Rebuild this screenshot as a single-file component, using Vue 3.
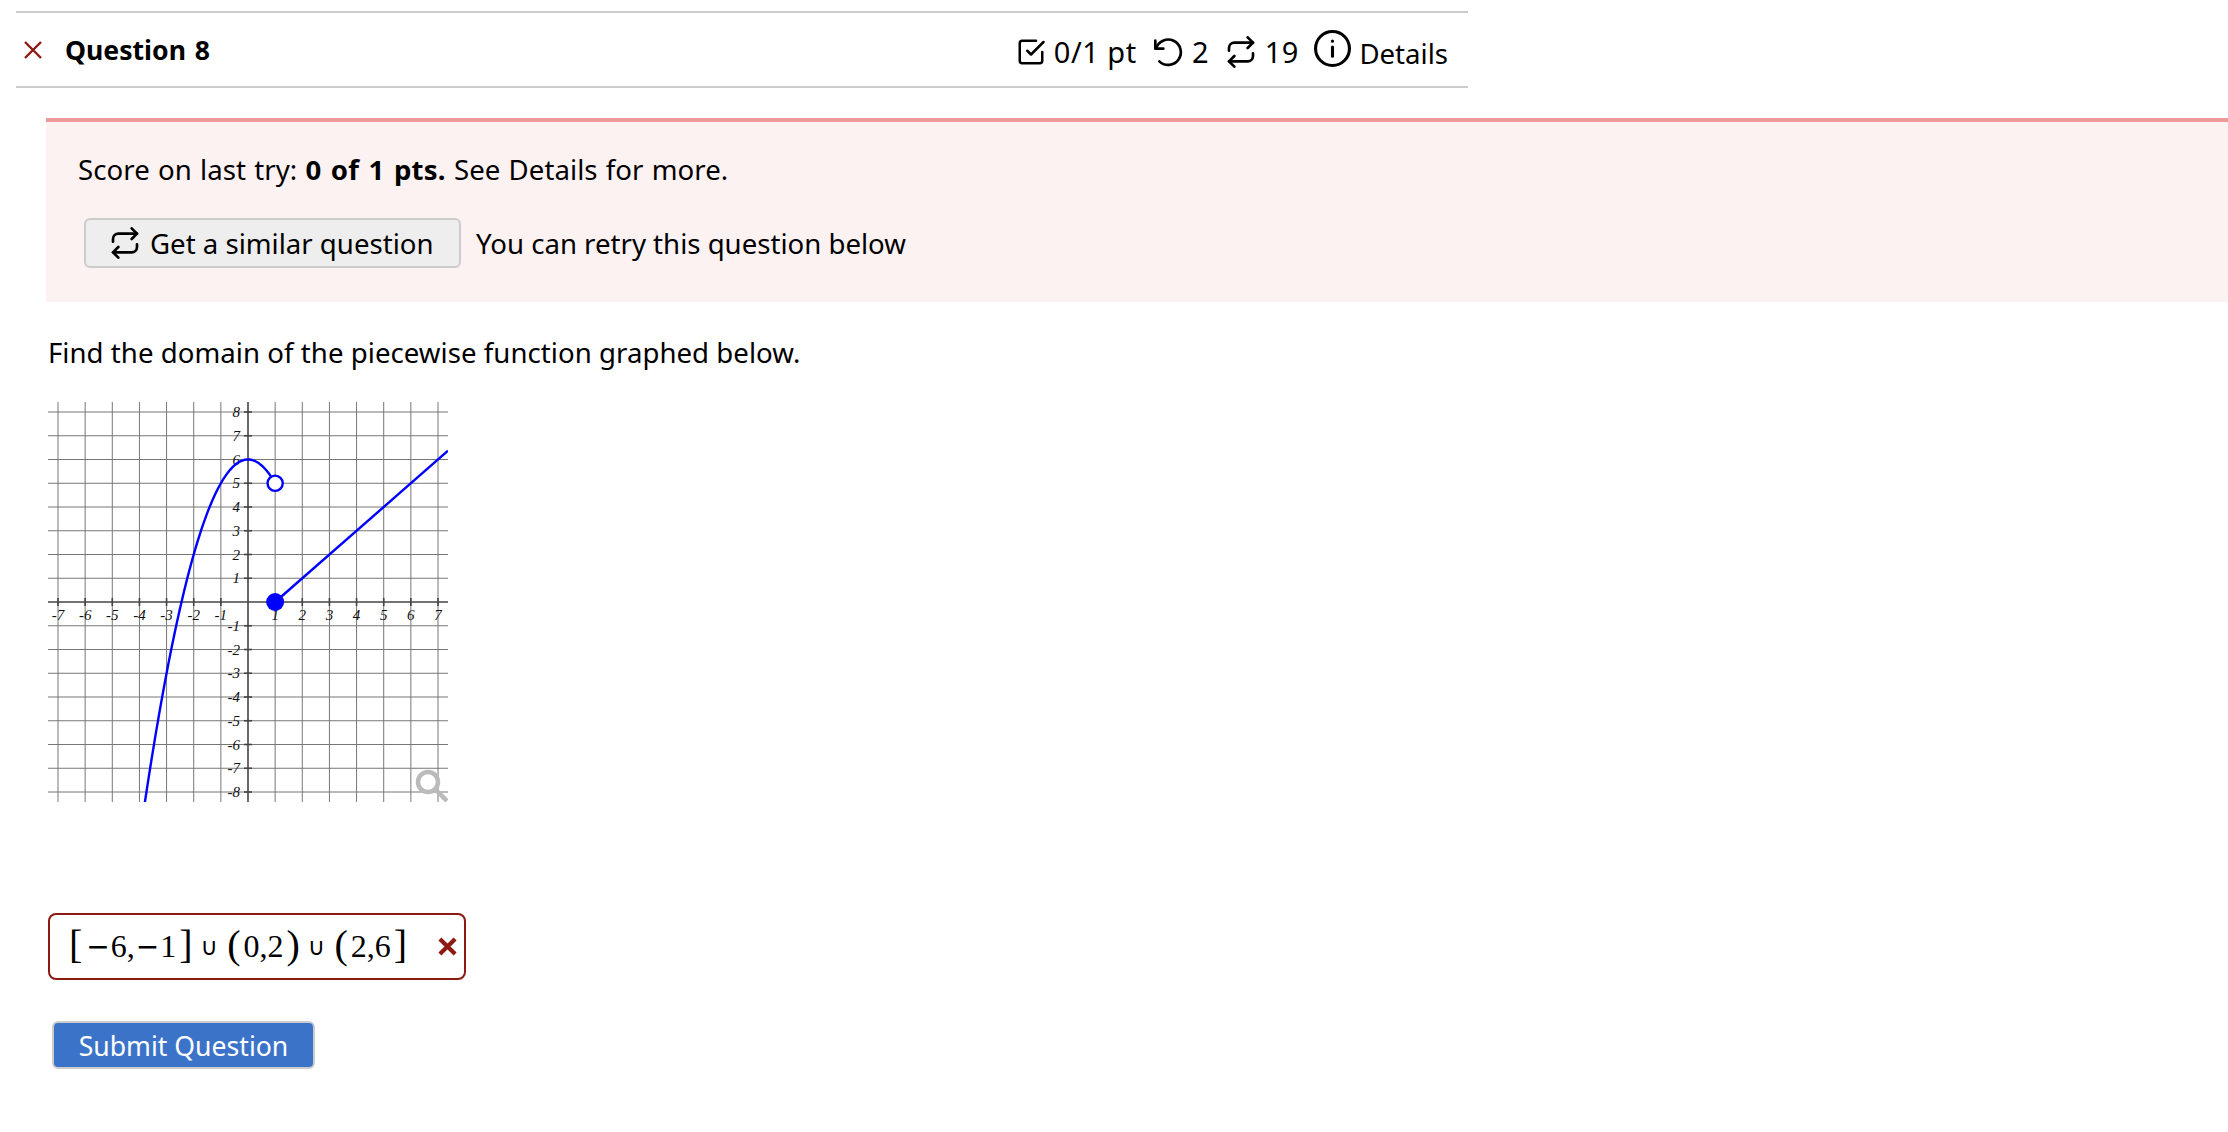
<template>
  <div class="page">
    <header class="qhead">
      <div class="qtitle">
        <svg class="xmark" viewBox="0 0 20 20" width="20" height="20"><path d="M2 2L18 18M18 2L2 18" /></svg>
        <span>Question 8</span>
      </div>
      <div class="qmeta">
        <span class="meta-item">
          <svg class="ico" viewBox="0 0 24 24" width="30" height="30"><path d="M9 11l3 3L22 4" /><path d="M21 12v7a2 2 0 0 1-2 2H5a2 2 0 0 1-2-2V5a2 2 0 0 1 2-2h11" /></svg>
          0/1 pt
        </span>
        <span class="meta-item">
          <svg class="ico" viewBox="0 0 24 24" width="32" height="32"><path d="M2.5 3.5v6h6" /><path d="M3 9.5A9.5 9.5 0 1 1 5.5 19" /></svg>
          2
        </span>
        <span class="meta-item">
          <svg class="ico" viewBox="0 0 24 24" width="32" height="32"><path d="M17 1l4 4-4 4" /><path d="M3 11V9a4 4 0 0 1 4-4h14" /><path d="M7 23l-4-4 4-4" /><path d="M21 13v2a4 4 0 0 1-4 4H3" /></svg>
          19
        </span>
        <span class="meta-item details">
          <svg class="ico info" viewBox="0 0 24 24" width="37" height="37"><circle cx="12" cy="12" r="11" /><path d="M12 17v-6" /><path d="M12 7.2v.1" /></svg>
          <span class="details-label">Details</span>
        </span>
      </div>
    </header>

    <section class="alert">
      <p class="score">Score on last try: <b>0 of 1 pts.</b> See Details for more.</p>
      <div class="retry">
        <button class="similar">
          <svg class="ico" viewBox="0 0 24 24" width="32" height="32"><path d="M17 1l4 4-4 4" /><path d="M3 11V9a4 4 0 0 1 4-4h14" /><path d="M7 23l-4-4 4-4" /><path d="M21 13v2a4 4 0 0 1-4 4H3" /></svg>
          Get a similar question
        </button>
        <span>You can retry this question below</span>
      </div>
    </section>

    <main class="body">
      <p class="prompt">Find the domain of the piecewise function graphed below.</p>

      <svg class="graph" viewBox="0 0 400 400" width="400" height="400">
        <line v-for="x in xTicks" :key="'vx' + x" class="grid" :x1="px(x)" :x2="px(x)" y1="0" y2="400" />
        <line v-for="y in yTicks" :key="'hy' + y" class="grid" x1="0" x2="400" :y1="py(y)" :y2="py(y)" />
        <line class="axis" :x1="px(0)" :x2="px(0)" y1="0" y2="400" />
        <line class="axis" x1="0" x2="400" :y1="py(0)" :y2="py(0)" />
        <line v-for="x in xTicks" :key="'tx' + x" class="tick" :x1="px(x)" :x2="px(x)" :y1="py(0) - 4" :y2="py(0) + 4" />
        <line v-for="y in yTicks" :key="'ty' + y" class="tick" :x1="px(0) - 4" :x2="px(0) + 4" :y1="py(y)" :y2="py(y)" />
        <text v-for="x in xTicks" :key="'lx' + x" class="lbl" :x="px(x)" :y="py(0) + 18" text-anchor="middle">{{ x }}</text>
        <text v-for="y in yTicks" :key="'ly' + y" class="lbl" :x="px(0) - 8" :y="py(y) + 5" text-anchor="end">{{ y }}</text>
        <path class="curve" :d="parabola" />
        <line class="curve" :x1="px(1)" :y1="py(0)" :x2="px(7.37)" :y2="py(6.37)" />
        <circle class="open" :cx="px(1)" :cy="py(5)" r="7.6" />
        <circle class="solid" :cx="px(1)" :cy="py(0)" r="9" />
        <circle class="lens" cx="380" cy="380" r="10" />
        <line class="lens" x1="387" y1="387" x2="399" y2="399" />
      </svg>

      <div class="answer">
        <span class="math">
          <i class="br">[</i><span class="minus">−</span><span>6,</span><span class="minus">−</span><span>1</span><i class="br">]</i>
          <span class="cup">∪</span>
          <i class="br">(</i><span>0,2</span><i class="br">)</i>
          <span class="cup">∪</span>
          <i class="br">(</i><span>2,6</span><i class="br">]</i>
        </span>
        <svg class="wrong" viewBox="0 0 20 20" width="19" height="19"><path d="M2 2L18 18M18 2L2 18" /></svg>
      </div>

      <button class="submit">Submit Question</button>
    </main>
  </div>
</template>

<script setup>
import { computed } from 'vue';

const XU = 380 / 14;
const YU = 380 / 16;
const px = (x) => 200 + x * XU;
const py = (y) => 200 - y * YU;

const xTicks = [-7, -6, -5, -4, -3, -2, -1, 1, 2, 3, 4, 5, 6, 7];
const yTicks = [-8, -7, -6, -5, -4, -3, -2, -1, 1, 2, 3, 4, 5, 6, 7, 8];

const parabola = computed(() => {
  const pts = [];
  for (let x = -3.81; x < 0.85; x += 0.05) {
    pts.push(px(x).toFixed(2) + ' ' + py(6 - x * x).toFixed(2));
  }
  return 'M' + pts.join('L');
});
</script>

<style>
html, body {
  margin: 0;
  background: #fff;
}
</style>

<style scoped>
.page {
  width: 2228px;
  height: 1132px;
  overflow: hidden;
  font-family: "Noto Sans", sans-serif;
  font-size: 27.6px;
  color: #000;
  background: #fff;
}
.qhead {
  display: flex;
  justify-content: space-between;
  align-items: center;
  box-sizing: border-box;
  width: 1452px;
  height: 77px;
  margin: 11px 0 0 16px;
  padding: 0 20px 0 7px;
  border-top: 2px solid #ccc;
  border-bottom: 2px solid #ccc;
}
.qtitle {
  display: flex;
  align-items: center;
  gap: 22px;
  font-size: 26.6px;
  font-weight: 700;
  word-spacing: 2px;
}
.xmark path {
  fill: none;
  stroke: #8c1a11;
  stroke-width: 2.4;
}
.qmeta {
  display: flex;
  align-items: center;
  gap: 15.5px;
  margin-top: 4px;
  font-size: 29px;
  letter-spacing: 0.5px;
}
.meta-item {
  display: flex;
  align-items: center;
  gap: 8px;
}
.ico {
  fill: none;
  stroke: #000;
  stroke-width: 2;
  stroke-linecap: round;
  stroke-linejoin: round;
}
.info {
  margin-top: -6px;
}
.details {
  font-size: 27.6px;
  letter-spacing: 0;
}
.details-label {
  margin-top: 2px;
}
.alert {
  box-sizing: border-box;
  height: 184px;
  margin: 30px 0 0 46px;
  padding: 28px 32px 0;
  background: #fdf2f2;
  border-top: 4px solid #ef9a9a;
}
.score {
  margin: 0;
  line-height: 38px;
  letter-spacing: 0.05px;
  word-spacing: 1px;
}
.score b {
  letter-spacing: 0.2px;
  word-spacing: 2px;
}
.retry {
  display: flex;
  align-items: center;
  gap: 15px;
  margin: 30px 0 0 6px;
}
.similar {
  display: flex;
  align-items: center;
  gap: 9px;
  box-sizing: border-box;
  width: 377px;
  height: 50px;
  padding: 0 23px;
  font: inherit;
  color: #000;
  background: #eee;
  border: 2px solid #ccc;
  border-radius: 6px;
}
.body {
  padding-left: 48px;
}
.prompt {
  margin: 31px 0 31px;
  line-height: 38px;
  letter-spacing: 0.04px;
}
.graph {
  display: block;
}
.grid {
  stroke: #777;
  stroke-width: 1;
}
.axis, .tick {
  stroke: #444;
  stroke-width: 1.6;
}
.lbl {
  font-family: "Liberation Serif", serif;
  font-style: italic;
  font-size: 15px;
  fill: #111;
}
.curve {
  fill: none;
  stroke: #00f;
  stroke-width: 2.4;
}
.open {
  fill: #fff;
  stroke: #00f;
  stroke-width: 2.4;
}
.solid {
  fill: #00f;
}
.lens {
  fill: none;
  stroke: #bbb;
  stroke-width: 4.5;
}
.answer {
  display: flex;
  align-items: center;
  justify-content: space-between;
  box-sizing: border-box;
  width: 418px;
  height: 67px;
  margin-top: 111px;
  padding: 0 7px 0 16px;
  border: 2px solid #8c1a11;
  border-radius: 8px;
}
.math {
  display: flex;
  align-items: center;
  font-family: "Liberation Serif", serif;
  font-size: 32px;
}
.minus {
  font-family: "DejaVu Sans", sans-serif;
  font-size: 28px;
  margin: 0 1px;
}
.br {
  font-style: normal;
  font-size: 40px;
  font-weight: 400;
  line-height: 1;
  margin: -4px 3px 0;
}
.cup {
  font-family: "DejaVu Sans", sans-serif;
  font-size: 24px;
  margin: 0 6px 0 5px;
}
.wrong path {
  fill: none;
  stroke: #8c1a11;
  stroke-width: 4.4;
}
.submit {
  display: block;
  box-sizing: border-box;
  width: 263px;
  height: 48px;
  margin: 41px 0 0 4px;
  padding: 2px 0 0;
  font: inherit;
  font-size: 26.6px;
  color: #fff;
  background: #3b73c9;
  border: 2px solid #ccc;
  border-radius: 6px;
}
</style>
